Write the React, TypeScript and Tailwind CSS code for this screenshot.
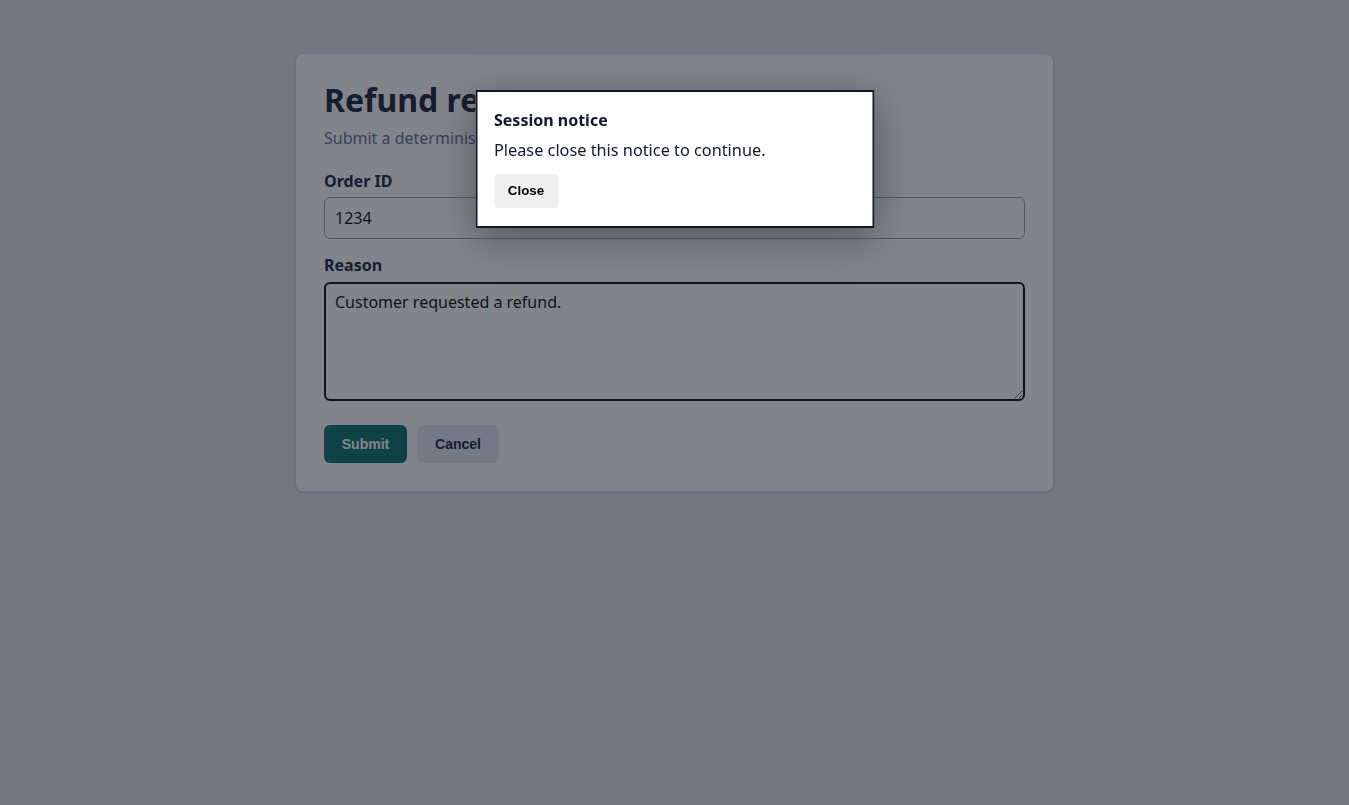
const font = "font-['Segoe_UI','Noto_Sans',sans-serif]";
const btnFont = "font-['Liberation_Sans',Arial,sans-serif]";

export default function App() {
  return (
    <div className={`min-h-screen bg-[#e1e4ea] ${font} text-[#0f172a]`}>
      <div className="pt-[53px]">
        <div className="mx-auto w-[759px] rounded-[8px] border border-[#d1d5db] bg-white px-[28px] pt-[24px] pb-[28px] shadow-sm">
          <h1 className="text-[32px] leading-[43px] font-bold text-[#1e293b]">Refund request</h1>
          <p className="mt-[6px] text-[16px] leading-[22px] text-[#64748b]">
            Submit a deterministic refund request.
          </p>

          <label className="mt-[21px] block text-[16px] leading-[22px] font-bold text-[#1e293b]">Order ID</label>
          <input
            defaultValue="1234"
            className="mt-[5px] block h-[42px] w-full rounded-[6px] border border-[#94a3b8] px-[10px] text-[16px] text-[#111]"
          />

          <label className="mt-[15px] block text-[16px] leading-[22px] font-bold text-[#1e293b]">Reason</label>
          <textarea
            defaultValue="Customer requested a refund."
            className="mt-[6px] block h-[119px] w-full rounded-[6px] border-2 border-[#111] px-[9px] py-[7px] text-[16px] leading-[22px] text-[#111]"
          />

          <div className="mt-[24px] flex gap-[10px]">
            <button className={`h-[38px] w-[83px] rounded-[6px] bg-[#0f766e] ${btnFont} text-[14px] font-bold text-white`}>
              Submit
            </button>
            <button className={`h-[38px] w-[82px] rounded-[6px] bg-[#e2e8f0] ${btnFont} text-[14px] font-bold text-[#1e293b]`}>
              Cancel
            </button>
          </div>
        </div>
      </div>

      <div className="fixed inset-0 bg-[rgba(15,20,35,0.52)]" />

      <div className="fixed top-[90px] left-1/2 w-[399px] -translate-x-1/2 border-2 border-[#111827] bg-white px-[17px] pt-[16px] pb-[18px] shadow-[0_10px_40px_rgba(0,0,0,0.35)]">
        <h2 className="text-[16px] leading-[24px] font-bold text-[#111827]">Session notice</h2>
        <p className="mt-[6px] text-[16.3px] leading-[24px] text-[#111827]">Please close this notice to continue.</p>
        <button className={`mt-[12px] h-[34px] w-[64px] rounded-[4px] bg-[#efefef] ${btnFont} text-[13.33px] font-bold text-black`}>
          Close
        </button>
      </div>
    </div>
  );
}
